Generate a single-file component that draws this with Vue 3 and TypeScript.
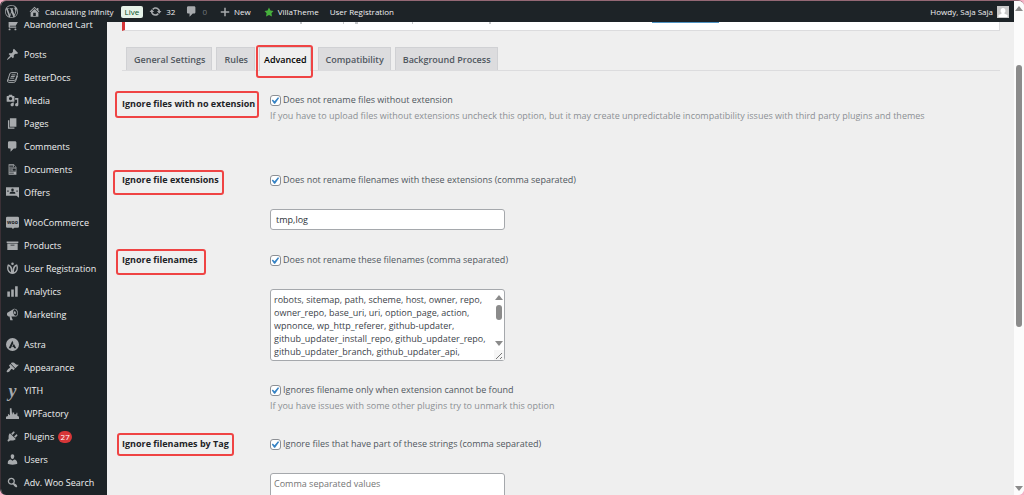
<script setup lang="ts">
import { ref } from 'vue'

interface MenuItem {
  label: string
  icon: string
  badge?: number
}

interface Tab {
  label: string
  active?: boolean
}

const icons: Record<string, string> = {
  wordpress:
    'M20 10c0-5.51-4.49-10-10-10C4.48 0 0 4.49 0 10c0 5.52 4.48 10 10 10 5.51 0 10-4.48 10-10zM7.78 15.37L4.37 6.22c.55-.02 1.17-.08 1.17-.08.5-.06.44-1.13-.06-1.11 0 0-1.45.11-2.37.11-.18 0-.37 0-.58-.01C4.12 2.69 6.87 1.11 10 1.11c2.33 0 4.45.87 6.05 2.34-.68-.11-1.65.39-1.65 1.58 0 .74.45 1.36.9 2.1.35.61.55 1.36.55 2.46 0 1.49-1.4 5-1.4 5l-3.03-8.37c.54-.02.82-.17.82-.17.5-.05.44-1.25-.06-1.22 0 0-1.44.12-2.38.12-.87 0-2.33-.12-2.33-.12-.5-.03-.56 1.2-.06 1.22l.92.08 1.26 3.41zM17.41 10c.24-.64.74-1.87.43-4.25.7 1.29 1.05 2.71 1.05 4.25 0 3.29-1.73 6.24-4.4 7.78.97-2.59 1.94-5.2 2.92-7.78zM6.1 18.09C3.12 16.65 1.11 13.53 1.11 10c0-1.3.23-2.48.72-3.59C3.25 10.3 4.67 14.2 6.1 18.09zm4.03-6.63l2.58 6.98c-.86.29-1.76.45-2.71.45-.79 0-1.57-.11-2.29-.33.81-2.38 1.62-4.74 2.42-7.1z',
  home: 'M16 8.5l1.53 1.53-1.06 1.06L10 4.6l-6.47 6.49-1.06-1.06L10 2.5l4 4v-2h2v4zm-6-2.46l6 5.99V18H4v-5.97zM12 17v-5H8v5h4z',
  update:
    'M10.2 3.28c3.53 0 6.43 2.61 6.92 6h2.08l-3.5 4-3.5-4h2.32c-.45-1.97-2.21-3.45-4.32-3.45-1.45 0-2.73.71-3.54 1.78L4.95 5.66C6.23 4.2 8.11 3.28 10.2 3.28zm-.4 13.44c-3.52 0-6.43-2.61-6.92-6H.8l3.5-4c1.17 1.33 2.33 2.67 3.5 4H5.48c.45 1.97 2.21 3.45 4.32 3.45 1.45 0 2.73-.71 3.54-1.78l1.71 1.95c-1.28 1.46-3.15 2.38-5.25 2.38z',
  comment: 'M5 2h9c1.1 0 2 .9 2 2v7c0 1.1-.9 2-2 2h-2l-5 5v-5H5c-1.1 0-2-.9-2-2V4c0-1.1.9-2 2-2z',
  plus: 'M18.5 8.5v3h-7v7h-3v-7h-7v-3h7v-7h3v7z',
  star: 'M10 1l3 6 6 .75-4.12 4.62L16 19l-6-3-6 3 1.13-6.63L1 7.75 7 7z',
  cart: 'M6 13h9c.55 0 1 .45 1 1s-.45 1-1 1H5c-.55 0-1-.45-1-1V4H2c-.55 0-1-.45-1-1s.45-1 1-1h3c.55 0 1 .45 1 1v2h13l-4 7H6v1zm-.5 3c.83 0 1.5.67 1.5 1.5S6.33 19 5.5 19 4 18.33 4 17.5 4.67 16 5.5 16zm9 0c.83 0 1.5.67 1.5 1.5s-.67 1.5-1.5 1.5-1.5-.67-1.5-1.5.67-1.5 1.5-1.5z',
  pin: 'M10.44 3.02l1.82-1.82 6.36 6.35-1.83 1.82c-1.05-.68-2.48-.57-3.41.36l-.75.75c-.92.93-1.04 2.35-.35 3.41l-1.83 1.82-2.41-2.41-2.8 2.79c-.42.42-3.38 2.71-3.8 2.29s1.86-3.39 2.28-3.81l2.79-2.79L4.1 9.36l1.83-1.82c1.05.69 2.48.57 3.4-.36l.75-.75c.93-.92 1.05-2.35.36-3.41z',
  media:
    'M13 11V4c0-.55-.45-1-1-1h-1.67L9 1H5L3.67 3H2c-.55 0-1 .45-1 1v7c0 .55.45 1 1 1h10c.55 0 1-.45 1-1zM7 4.5c1.38 0 2.5 1.12 2.5 2.5S8.38 9.5 7 9.5 4.5 8.38 4.5 7 5.62 4.5 7 4.5zM14 6h5v10.5c0 1.38-1.12 2.5-2.5 2.5S14 17.88 14 16.5s1.12-2.5 2.5-2.5c.17 0 .34.02.5.05V9h-3V6zm-4 8.05V13h2v3.5c0 1.38-1.12 2.5-2.5 2.5S7 17.88 7 16.5 8.12 14 9.5 14c.17 0 .34.02.5.05z',
  pages: 'M6 15V2h10v13H6zm-1 1h8v2H3V5h2v11z',
  document:
    'M12 2l4 4v12H4V2h8zM5 3v1h6V3H5zm7 3h3l-3-3v3zM5 5v1h6V5H5zm10 3V7H5v1h10zM5 9v1h4V9H5zm10 3V9h-5v3h5zM5 11v1h4v-1H5zm10 3v-1H5v1h10zm-3 2v-1H5v1h7z',
  archive: 'M19 4v2H1V4h18zM2 7h16v10H2V7zm11 3V9H7v1h6z',
  chart: 'M18 18V2h-4v16h4zm-6 0V7H8v11h4zm-6 0v-8H2v8h4z',
  megaphone:
    'M18.15 5.94c.46 1.62.38 3.22-.02 4.48-.42 1.28-1.26 2.18-2.3 2.48-.16.06-.26.06-.4.06-.06.02-.12.02-.18.02-.06.02-.14.02-.22.02h-6.8l2.22 5.5c.02.14-.06.26-.14.34-.08.1-.24.16-.34.16H6.95c-.1 0-.26-.06-.34-.16-.08-.08-.16-.2-.14-.34l-1-5.5H4.25l-.02-.02c-.5.06-1.08-.18-1.54-.62s-.88-1.08-1.06-1.88c-.24-.8-.2-1.56-.02-2.2.18-.62.58-1.08 1.06-1.3l.02-.02 9-5.4c.1-.06.18-.1.24-.16.06-.04.14-.08.24-.12.16-.08.28-.12.5-.18 1.04-.3 2.24.1 3.22.98s1.84 2.24 2.26 3.86zm-2.58 5.98h-.02c.4-.1.74-.34 1.04-.7.58-.7.86-1.76.86-3.04 0-.64-.1-1.3-.28-1.98-.34-1.36-1.02-2.5-1.78-3.24s-1.68-1.1-2.46-.88c-.82.22-1.4.96-1.7 2-.32 1.04-.28 2.36.06 3.72.38 1.36 1 2.5 1.8 3.24.78.74 1.62 1.1 2.48.88zm-2.54-7.08c.22-.04.42-.02.62.04.38.16.76.48 1.02 1s.42 1.2.42 1.78c0 .3-.04.56-.12.8-.18.48-.44.84-.86.94-.34.1-.8-.06-1.14-.4s-.64-.86-.78-1.5c-.18-.62-.12-1.24.02-1.72s.48-.84.82-.94z',
  registration:
    'M3 3.5c3 .6 5.400 2.700 6.200 5.500.5 1.700.8 3.700.8 6.500 0-2.800.3-4.800.8-6.500C11.600 6.200 14 4.100 17 3.500c1.500 3 1.800 6.500.6 9.500-1.300 3.300-4.200 5.500-7.600 5.500S3.700 16.300 2.400 13C1.200 10 1.500 6.500 3 3.500zM4.300 6c-.9 2.600-.6 5.200.5 7.200.7 1.200 1.700 2.100 2.900 2.700C7.600 11.500 7.200 8 4.300 6zm11.400 0c-2.900 2-3.300 5.500-3.400 9.900 1.200-.6 2.200-1.500 2.900-2.700 1.100-2 1.400-4.600.5-7.200zM10 .8a2 2 0 1 1 0 4 2 2 0 0 1 0-4z',
  astra:
    'M10 0a10 10 0 1 0 0 20 10 10 0 0 0 0-20zM9.700 4.300l1.700 3.500-3.900 7.900H4.100zM12 9l3.800 6.700h-3.300l-.8-1.700H9.600z',
  appearance:
    'M14.48 11.06L7.41 3.99l1.5-1.5c.5-.56 2.3-.47 3.51.32 1.21.8 1.43 1.28 2.91 2.1 1.18.64 2.45 1.26 4.45.85zm-.71.71L6.7 4.7 4.93 6.47c-.39.39-.39 1.02 0 1.41l1.06 1.06c.39.39.39 1.03 0 1.42-.6.6-1.43 1.11-2.21 1.69-.35.26-.7.53-1.01.84C1.43 14.23.4 16.08 1.4 17.07c.99 1 2.84-.03 4.18-1.36.31-.31.58-.66.85-1.02.57-.78 1.08-1.61 1.69-2.21.39-.39 1.02-.39 1.41 0l1.06 1.06c.39.39 1.02.39 1.41 0z',
  factory: 'M0 18.500v-3.500l3-1v-3.500l3 2V2h2.500l.8 9h.7V8.500h2.500V11H16v-2h1.500v4.500l2.500 1.500v3.500z',
  plugin:
    'M13.11 4.36L9.87 7.6 8 5.73l3.24-3.24c.35-.34 1.05-.2 1.56.32.52.51.66 1.21.31 1.55zm-8 1.77l.91-1.12 9.01 9.01-1.19.84c-.71.71-2.63 1.16-3.82 1.16H6.14L4.9 17.26c-.59.59-1.54.59-2.12 0-.59-.58-.59-1.53 0-2.12l1.24-1.24v-3.88c0-1.13.4-3.19 1.09-3.89zm7.26 3.97l3.24-3.24c.34-.35 1.04-.21 1.55.31.52.51.66 1.21.31 1.55l-3.24 3.25z',
  user: 'M10 9.25c-2.27 0-2.73-3.44-2.73-3.44C7 4.02 7.82 2 9.97 2c2.16 0 2.98 2.02 2.71 3.81 0 0-.41 3.44-2.68 3.44zm0 2.57L12.72 10c2.39 0 4.52 2.33 4.52 4.53v2.49s-3.65 1.13-7.24 1.13c-3.65 0-7.24-1.13-7.24-1.13v-2.49c0-2.25 1.94-4.48 4.47-4.48z',
  search:
    'M12.14 4.18c1.87 1.87 2.11 4.75.72 6.89.12.1.22.21.36.31.2.16.47.36.81.59.34.24.56.39.66.47.42.31.73.57.94.78.32.32.6.65.84 1 .25.35.44.69.59 1.04.14.35.21.68.18 1-.02.32-.14.59-.36.81s-.49.34-.81.36c-.31.02-.65-.04-.99-.19-.35-.14-.7-.34-1.04-.59-.35-.24-.68-.52-1-.84-.21-.21-.47-.52-.77-.93-.1-.13-.25-.35-.47-.66-.22-.32-.4-.57-.56-.78-.16-.2-.29-.35-.44-.5-2.07 1.09-4.69.76-6.44-.98-2.14-2.15-2.14-5.64 0-7.78 2.15-2.15 5.63-2.15 7.78 0zm-1.41 6.36c1.36-1.37 1.36-3.58 0-4.95-1.37-1.37-3.59-1.37-4.95 0-1.37 1.37-1.37 3.58 0 4.95 1.36 1.37 3.58 1.37 4.95 0z',
}

const menuGroups: MenuItem[][] = [
  [{ label: 'Abandoned Cart', icon: 'cart' }],
  [
    { label: 'Posts', icon: 'pin' },
    { label: 'BetterDocs', icon: 'betterdocs' },
    { label: 'Media', icon: 'media' },
    { label: 'Pages', icon: 'pages' },
    { label: 'Comments', icon: 'comment' },
    { label: 'Documents', icon: 'document' },
    { label: 'Offers', icon: 'offers' },
  ],
  [
    { label: 'WooCommerce', icon: 'woo' },
    { label: 'Products', icon: 'archive' },
    { label: 'User Registration', icon: 'registration' },
    { label: 'Analytics', icon: 'chart' },
    { label: 'Marketing', icon: 'megaphone' },
  ],
  [
    { label: 'Astra', icon: 'astra' },
    { label: 'Appearance', icon: 'appearance' },
    { label: 'YITH', icon: 'yith' },
    { label: 'WPFactory', icon: 'factory' },
    { label: 'Plugins', icon: 'plugin', badge: 27 },
    { label: 'Users', icon: 'user' },
    { label: 'Adv. Woo Search', icon: 'search' },
  ],
]

const tabs: Tab[] = [
  { label: 'General Settings' },
  { label: 'Rules' },
  { label: 'Advanced', active: true },
  { label: 'Compatibility' },
  { label: 'Background Process' },
]

const ignoreNoExtension = ref(true)
const ignoreExtensions = ref(true)
const extensions = ref('tmp,log')
const ignoreFilenames = ref(true)
const filenames = ref(
  'robots, sitemap, path, scheme, host, owner, repo,\nowner_repo, base_uri, uri, option_page, action,\nwpnonce, wp_http_referer, github-updater,\ngithub_updater_install_repo, github_updater_repo,\ngithub_updater_branch, github_updater_api,',
)
const onlyWithoutExtension = ref(true)
const ignoreByTag = ref(true)
const tagStrings = ref('')
</script>

<template>
  <div class="window">
    <div class="page">
      <header class="adminbar">
        <a href="#" class="bar-item logo" aria-label="About WordPress">
          <svg class="icon" viewBox="0 0 20 20"><path :d="icons.wordpress" /></svg>
        </a>
        <a href="#" class="bar-item site">
          <svg class="icon" viewBox="0 0 20 20"><path :d="icons.home" /></svg>
          <span>Calculating Infinity</span>
        </a>
        <a href="#" class="live">Live</a>
        <a href="#" class="bar-item updates">
          <svg class="icon" viewBox="0 0 20 20"><path :d="icons.update" /></svg>
          <span>32</span>
        </a>
        <a href="#" class="bar-item comments">
          <svg class="icon" viewBox="0 0 20 20"><path :d="icons.comment" /></svg>
          <span class="dim">0</span>
        </a>
        <a href="#" class="bar-item new">
          <svg class="icon small" viewBox="0 0 20 20"><path :d="icons.plus" /></svg>
          <span>New</span>
        </a>
        <a href="#" class="bar-item villa">
          <svg class="icon small star" viewBox="0 0 20 20"><path :d="icons.star" /></svg>
          <span>VillaTheme</span>
        </a>
        <a href="#" class="bar-item">User Registration</a>
        <a href="#" class="bar-item account">
          <span>Howdy, Saja Saja</span>
          <svg class="avatar" viewBox="0 0 12 12">
            <path class="avatar-back" d="M0 0h12v12H0z" />
            <path class="avatar-person" d="M6 2a2.400 2.600 0 0 1 1.500 4.700v1l3 1.300V11h-9V9l3-1.300v-1A2.400 2.600 0 0 1 6 2z" />
          </svg>
        </a>
      </header>

      <div class="body">
        <nav class="sidebar" aria-label="Main menu">
          <ul v-for="(group, g) in menuGroups" :key="g" class="group">
            <li v-for="item in group" :key="item.label">
              <a href="#" class="menu-link">
                <svg v-if="item.icon === 'betterdocs'" class="icon outline" viewBox="0 0 20 20">
                  <path d="M8 2.500h8q2.500 0 1.700 2.500l-2.500 7.500q-.7 2-2.700 2H5q-2.500 0-1.700-2.300L5.800 4.500q.6-2 2.200-2z" />
                  <path d="M8.500 6h6M7.500 8.500h6M6.500 11h6M2.500 13q-1.500 4.500 2 4.500h7.500q2 0 2.800-2l3-8" />
                </svg>
                <svg v-else-if="item.icon === 'offers'" class="icon" viewBox="0 0 20 20">
                  <path fill-rule="evenodd" d="M0 2h20v16l-4-3H0zM10 4a2 2 0 1 0 0 4 2 2 0 0 0 0-4zM5.500 12h9q0-3.500-4.500-3.500T5.500 12zM2 7v2h2V7zm14 0v2h2V7z" />
                </svg>
                <svg v-else-if="item.icon === 'woo'" class="icon" viewBox="0 0 20 20">
                  <path d="M2 1h16q2 0 2 2v13q0 2-2 2h-5l-2.500 2L9 18H2q-2 0-2-2V3q0-2 2-2z" />
                  <text x="10" y="12" text-anchor="middle" class="woo">woo</text>
                </svg>
                <span v-else-if="item.icon === 'yith'" class="yith" aria-hidden="true">y</span>
                <svg v-else class="icon" viewBox="0 0 20 20">
                  <path fill-rule="evenodd" :d="icons[item.icon]" />
                </svg>
                <span>{{ item.label }}</span>
                <span v-if="item.badge" class="badge">{{ item.badge }}</span>
              </a>
            </li>
          </ul>
        </nav>

        <main class="content">
          <div class="notice">
            <svg class="descenders" viewBox="0 0 200 2" aria-hidden="true">
              <path d="M1 1h2M44 1h1M56 1h3M113 1h1M190 1h2" />
            </svg>
            <span class="notice-action"></span>
          </div>

          <nav class="tabs" aria-label="Settings sections">
            <a v-for="tab in tabs" :key="tab.label" href="#" class="tab" :class="{ active: tab.active }">{{ tab.label }}</a>
          </nav>

          <form class="form" @submit.prevent>
            <section class="row first">
              <h3 class="heading"><span class="mark mark-wide">Ignore files with no extension</span></h3>
              <div class="field">
                <label class="check"><input v-model="ignoreNoExtension" type="checkbox" />Does not rename files without extension</label>
                <p class="help">If you have to upload files without extensions uncheck this option, but it may create unpredictable incompatibility issues with third party plugins and themes</p>
              </div>
            </section>

            <section class="row">
              <h3 class="heading"><span class="mark mark-left">Ignore file extensions</span></h3>
              <div class="field">
                <label class="check"><input v-model="ignoreExtensions" type="checkbox" />Does not rename filenames with these extensions (comma separated)</label>
                <input v-model="extensions" class="textbox control" type="text" aria-label="Ignored file extensions" />
              </div>
            </section>

            <section class="row">
              <h3 class="heading"><span class="mark">Ignore filenames</span></h3>
              <div class="field">
                <label class="check"><input v-model="ignoreFilenames" type="checkbox" />Does not rename these filenames (comma separated)</label>
                <div class="area control">
                  <textarea v-model="filenames" rows="5" aria-label="Ignored filenames"></textarea>
                  <div class="area-bar" aria-hidden="true">
                    <i class="arrow up"></i>
                    <i class="area-thumb"></i>
                    <i class="arrow down"></i>
                    <svg class="grip" viewBox="0 0 10 10"><path d="M2 9l6-6M6 9l2-2" /></svg>
                  </div>
                </div>
                <label class="check spaced"><input v-model="onlyWithoutExtension" type="checkbox" />Ignores filename only when extension cannot be found</label>
                <p class="help">If you have issues with some other plugins try to unmark this option</p>
              </div>
            </section>

            <section class="row">
              <h3 class="heading"><span class="mark mark-tag">Ignore filenames by Tag</span></h3>
              <div class="field">
                <label class="check"><input v-model="ignoreByTag" type="checkbox" />Ignore files that have part of these strings (comma separated)</label>
                <div class="area control">
                  <textarea v-model="tagStrings" rows="5" placeholder="Comma separated values" aria-label="Ignored strings"></textarea>
                </div>
              </div>
            </section>
          </form>
        </main>
      </div>
    </div>

    <div class="scrollbar" aria-hidden="true">
      <i class="arrow up"></i>
      <i class="thumb"></i>
      <i class="arrow down"></i>
    </div>
  </div>
</template>

<style>
body {
  margin: 0;
  background: #f6b3c8;
}
</style>

<style scoped>
* {
  box-sizing: border-box;
}

.window {
  display: flex;
  height: 100vh;
  overflow: hidden;
  border-top: 1px solid #946875;
  border-left: 1px solid #3b3036;
  border-radius: 6px;
  background: #efefef;
  color: #50575e;
  font-family: 'Open Sans', 'Noto Sans', sans-serif;
  font-size: 9px;
  line-height: 16px;
}

a {
  color: inherit;
  text-decoration: none;
}

.page {
  display: flex;
  flex: 1;
  flex-direction: column;
  min-width: 0;
}

.icon {
  flex: none;
  width: 13px;
  height: 13px;
  fill: #a7aaad;
}

.adminbar {
  z-index: 1;
  display: flex;
  flex: none;
  align-items: center;
  height: 21px;
  padding: 0 5px 0 4px;
  background: #1d2327;
  color: #f0f0f1;
  font-size: 8px;
}

.bar-item {
  display: flex;
  align-items: center;
  gap: 4px;
  white-space: nowrap;
}

.logo {
  margin-right: 10px;
}

.live {
  height: 12px;
  margin: 0 6px 0 7px;
  padding: 0 4px;
  border-radius: 2px;
  background: #e6f2e8;
  color: #00501c;
  line-height: 12px;
}

.comments {
  margin-left: 10px;
}

.dim {
  color: #72777c;
}

.new {
  margin-left: 13px;
}

.small {
  width: 10px;
  height: 10px;
}

.villa {
  margin: 0 11px 0 13px;
}

.star {
  fill: #46b03c;
}

.account {
  margin-left: auto;
}

.avatar {
  width: 12px;
  height: 12px;
}

.avatar-back {
  fill: #c8c8c8;
}

.avatar-person {
  fill: #fff;
}

.body {
  display: flex;
  flex: 1;
  min-height: 0;
}

.sidebar {
  flex: none;
  width: 106px;
  background: #1d2327;
  color: #f0f0f1;
}

.group {
  margin: 0 0 7px;
  padding: 0;
  list-style: none;
}

.group:first-child {
  margin-top: -9px;
}

.menu-link {
  display: flex;
  align-items: center;
  gap: 5px;
  height: 23px;
  padding-left: 5px;
  white-space: nowrap;
}

.outline {
  fill: none;
  stroke: #a7aaad;
  stroke-width: 1.5;
}

.woo {
  fill: #1d2327;
  font-size: 8px;
  font-weight: 700;
}

.yith {
  width: 13px;
  color: #a7aaad;
  font-family: 'Liberation Serif', serif;
  font-size: 18px;
  font-style: italic;
  font-weight: 700;
  line-height: 20px;
  text-align: center;
}

.badge {
  min-width: 14px;
  height: 12px;
  margin-left: -1px;
  padding: 0 2px;
  border-radius: 6px;
  background: #d63638;
  color: #fff;
  font-size: 8px;
  line-height: 12px;
  text-align: center;
}

.content {
  flex: 1;
  min-width: 0;
  padding: 0 14px 0 15px;
  overflow: hidden;
}

.notice {
  position: relative;
  height: 9px;
  border: 1px solid #dcdcde;
  border-top: 0;
  border-left: 3px solid #d63638;
  background: #fff;
}

.descenders {
  position: absolute;
  top: 0;
  left: 174px;
  width: 200px;
  height: 2px;
  stroke: #8c8f94;
}

.notice-action {
  position: absolute;
  top: 0;
  left: 527px;
  width: 67px;
  height: 1px;
  background: #4f94c4;
}

.tabs {
  display: flex;
  gap: 4px;
  margin-top: 16px;
  padding-left: 4px;
  border-bottom: 1px solid #dcdcde;
}

.tab {
  height: 23px;
  padding: 0 6px 0 7px;
  border: 1px solid #d0d1d4;
  border-bottom: 0;
  background: #dcdcde;
  font-weight: 600;
  line-height: 24px;
  white-space: nowrap;
}

.tab.active {
  position: relative;
  height: 24px;
  margin: 0 3px -1px 0;
  padding: 0 3px 0 4px;
  background: #efefef;
  color: #000;
}

.tab.active::after,
.mark::after {
  position: absolute;
  border: 2px solid #ef4444;
  border-radius: 3px;
  content: '';
}

.tab.active::after {
  inset: -3px -3px -7px -4px;
}

.form {
  display: flex;
  flex-direction: column;
  gap: 22px;
  margin-top: 21px;
}

.row {
  display: grid;
  grid-template-columns: 148px 1fr;
}

.first {
  min-height: 58px;
}

.first .heading {
  padding-top: 4px;
}

.heading {
  margin: 0;
  color: #1d2327;
  font-size: 9px;
  font-weight: 700;
  line-height: 16px;
}

.mark {
  position: relative;
  display: inline-block;
  white-space: nowrap;
}

.mark::after {
  inset: -3px -8px -7px -6px;
}

.mark-wide::after {
  inset: -5px -4px -6px -7px;
}

.mark-left::after {
  inset: -2px -5px -7px -9px;
}

.mark-tag::after {
  inset: -3px -5px -4px -5px;
}

.check {
  display: flex;
  align-items: center;
  gap: 2px;
}

.check input {
  width: 11px;
  height: 11px;
  margin: 0;
  border: 1px solid #8c8f94;
  border-radius: 3px;
  background: #fff;
  appearance: none;
}

.check input:checked {
  background: #fff
    url("data:image/svg+xml,%3Csvg xmlns='http://www.w3.org/2000/svg' viewBox='4 3 14 13'%3E%3Cpath d='M14.83 4.390l1.840 1.240-6.310 9.080H8.820L5.280 9.670l1.540-1.550 2.670 2.400z' fill='%233582c4'/%3E%3C/svg%3E")
    center / 9px 9px no-repeat;
}

.help {
  margin: 0;
  color: #8c8f94;
}

.control {
  width: 235px;
  max-width: 100%;
  margin-top: 21px;
  border: 1px solid #a5a8ac;
  border-radius: 3px;
  background: #fff;
}

.textbox {
  display: block;
  height: 21px;
  padding: 0 5px;
  color: #2c3338;
  font: inherit;
}

.area {
  display: flex;
}

.area textarea {
  flex: 1;
  min-width: 0;
  padding: 3px 0 2px 3px;
  border: 0;
  background: transparent;
  color: #3c434a;
  font: inherit;
  line-height: 13px;
  white-space: pre;
  overflow: hidden;
  resize: none;
}

.area textarea::placeholder {
  color: #757575;
}

.area-bar {
  display: flex;
  flex: none;
  flex-direction: column;
  align-items: center;
  width: 10px;
  padding-top: 5px;
}

.area-thumb {
  width: 6px;
  height: 15px;
  margin-top: 5px;
  border-radius: 3px;
  background: #8b8b8b;
}

.area-bar .down {
  margin: auto 0 4px;
}

.grip {
  width: 10px;
  height: 10px;
  background: #f6f6f6;
  stroke: #777;
  stroke-width: 1;
}

.spaced {
  margin-top: 21px;
}

.arrow {
  width: 8px;
  height: 5px;
  background: #8b8b8b;
}

.up {
  clip-path: polygon(50% 0, 100% 100%, 0 100%);
}

.down {
  clip-path: polygon(0 0, 100% 0, 50% 100%);
}

.scrollbar {
  display: flex;
  flex: none;
  flex-direction: column;
  align-items: center;
  width: 10px;
  padding: 5px 0 4px;
  background: #fcfcfc;
}

.thumb {
  width: 6px;
  height: 54%;
  margin-top: 54px;
  border-radius: 3px;
  background: #8b8b8b;
}

.scrollbar .down {
  margin-top: auto;
}
</style>
